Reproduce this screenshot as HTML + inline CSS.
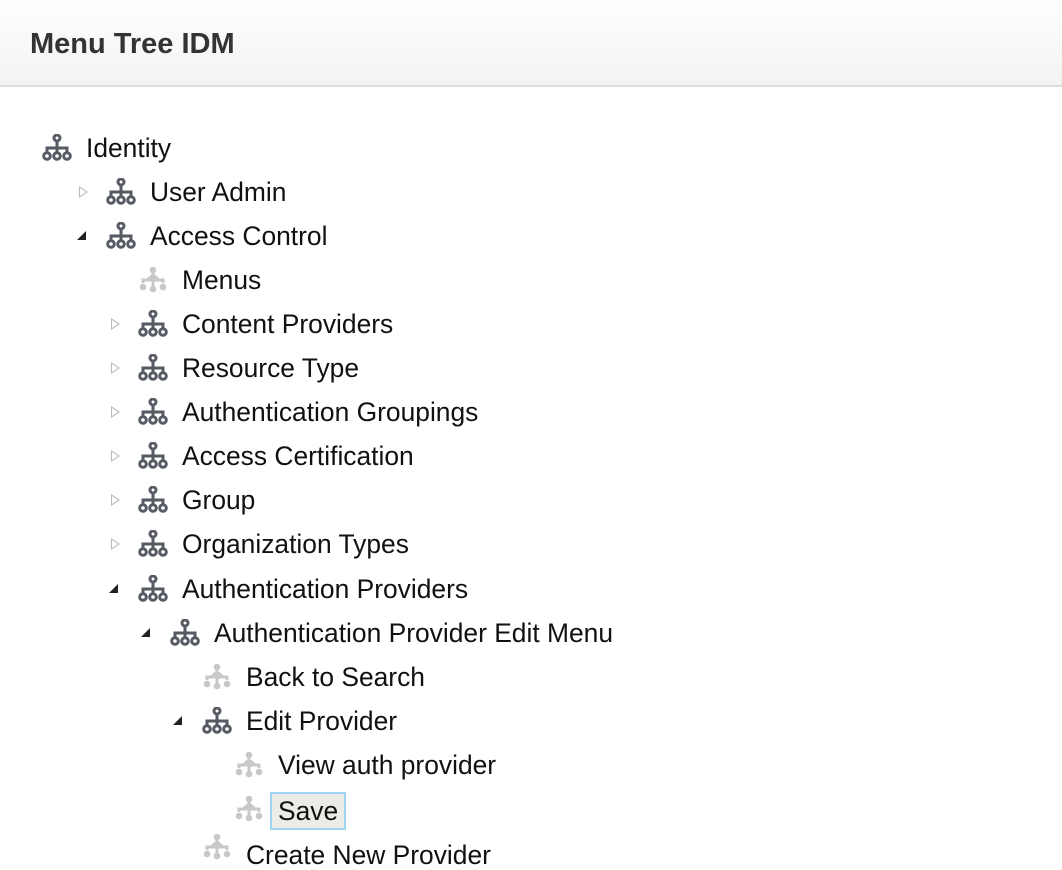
<!DOCTYPE html>
<html><head><style>
body{margin:0;width:1062px;height:846px;overflow:hidden;background:#fff;font-family:"Liberation Sans",Arial,sans-serif;position:relative}
.hdr{position:absolute;left:0;top:0;width:1062px;height:85px;background:linear-gradient(#fefefe,#f3f3f3);border-bottom:2px solid #dcdcdc}
.hdr h1{margin:0;position:absolute;left:30px;top:28px;font-size:29px;font-weight:bold;color:#333}
.r{position:absolute;height:30px;font-size:26.4px;color:#111;white-space:nowrap;line-height:30px}
.r svg{position:absolute;top:1px}
.r span{position:absolute;top:0}
.ar{position:absolute;top:9px;width:0;height:0}
.c{border-left:9px solid #bbb;border-top:6px solid transparent;border-bottom:6px solid transparent}
.c::after{content:"";position:absolute;left:-8px;top:-4px;border-left:6px solid #fff;border-top:4px solid transparent;border-bottom:4px solid transparent}
.o{border-right:9px solid #222;border-top:9px solid transparent;top:10px}
.sel{border:2px solid #9dd6f2;background:#ecebe6;padding:0 6px;margin-left:-8px;top:-2px !important;line-height:34px}
</style></head><body>
<svg width="0" height="0" style="position:absolute"><defs>
<g id="d"><circle cx="15" cy="4" r="3" fill="none" stroke="#555a63" stroke-width="3"/><path d="M15 7V14M5 18V14H25V18M15 14V18" fill="none" stroke="#555a63" stroke-width="3"/><circle cx="5" cy="22" r="3.3" fill="none" stroke="#555a63" stroke-width="3"/><circle cx="15" cy="22" r="3.3" fill="none" stroke="#555a63" stroke-width="3"/><circle cx="25" cy="22" r="3.3" fill="none" stroke="#555a63" stroke-width="3"/></g>
<g id="l"><circle cx="15" cy="4" r="3.3" fill="#c8c8c8"/><path d="M15 6V14M9 14L15 9L21 14M5 17V14H25V17M15 14V20" fill="none" stroke="#c8c8c8" stroke-width="3"/><circle cx="5" cy="21" r="3.3" fill="#c8c8c8"/><circle cx="15" cy="23" r="3.3" fill="#c8c8c8"/><circle cx="25" cy="21" r="3.3" fill="#c8c8c8"/></g>
</defs></svg>
<div class="hdr"><h1>Menu Tree IDM</h1></div>

<div class="r" style="left:0;top:133px"><svg style="left:42px" width="30" height="27"><use href="#d"/></svg><span style="left:86px">Identity</span></div>
<div class="r" style="left:0;top:177px"><i class="ar c" style="left:79px"></i><svg style="left:106px" width="30" height="27"><use href="#d"/></svg><span style="left:150px">User Admin</span></div>
<div class="r" style="left:0;top:221px"><i class="ar o" style="left:77px"></i><svg style="left:106px" width="30" height="27"><use href="#d"/></svg><span style="left:150px">Access Control</span></div>
<div class="r" style="left:0;top:265px"><svg style="left:138px" width="30" height="27"><use href="#l"/></svg><span style="left:182px">Menus</span></div>
<div class="r" style="left:0;top:309px"><i class="ar c" style="left:111px"></i><svg style="left:138px" width="30" height="27"><use href="#d"/></svg><span style="left:182px">Content Providers</span></div>
<div class="r" style="left:0;top:353px"><i class="ar c" style="left:111px"></i><svg style="left:138px" width="30" height="27"><use href="#d"/></svg><span style="left:182px">Resource Type</span></div>
<div class="r" style="left:0;top:397px"><i class="ar c" style="left:111px"></i><svg style="left:138px" width="30" height="27"><use href="#d"/></svg><span style="left:182px">Authentication Groupings</span></div>
<div class="r" style="left:0;top:441px"><i class="ar c" style="left:111px"></i><svg style="left:138px" width="30" height="27"><use href="#d"/></svg><span style="left:182px">Access Certification</span></div>
<div class="r" style="left:0;top:485px"><i class="ar c" style="left:111px"></i><svg style="left:138px" width="30" height="27"><use href="#d"/></svg><span style="left:182px">Group</span></div>
<div class="r" style="left:0;top:529px"><i class="ar c" style="left:111px"></i><svg style="left:138px" width="30" height="27"><use href="#d"/></svg><span style="left:182px">Organization Types</span></div>
<div class="r" style="left:0;top:574px"><i class="ar o" style="left:109px"></i><svg style="left:138px" width="30" height="27"><use href="#d"/></svg><span style="left:182px">Authentication Providers</span></div>
<div class="r" style="left:0;top:618px"><i class="ar o" style="left:141px"></i><svg style="left:170px" width="30" height="27"><use href="#d"/></svg><span style="left:214px">Authentication Provider Edit Menu</span></div>
<div class="r" style="left:0;top:662px"><svg style="left:202px" width="30" height="27"><use href="#l"/></svg><span style="left:246px">Back to Search</span></div>
<div class="r" style="left:0;top:706px"><i class="ar o" style="left:173px"></i><svg style="left:202px" width="30" height="27"><use href="#d"/></svg><span style="left:246px">Edit Provider</span></div>
<div class="r" style="left:0;top:750px"><svg style="left:234px" width="30" height="27"><use href="#l"/></svg><span style="left:278px">View auth provider</span></div>
<div class="r" style="left:0;top:794px"><svg style="left:234px" width="30" height="27"><use href="#l"/></svg><span class="sel" style="left:278px">Save</span></div>
<div class="r" style="left:0;top:832px"><svg style="left:202px" width="30" height="27"><use href="#l"/></svg><span style="left:246px;top:8px">Create New Provider</span></div>
</body></html>
